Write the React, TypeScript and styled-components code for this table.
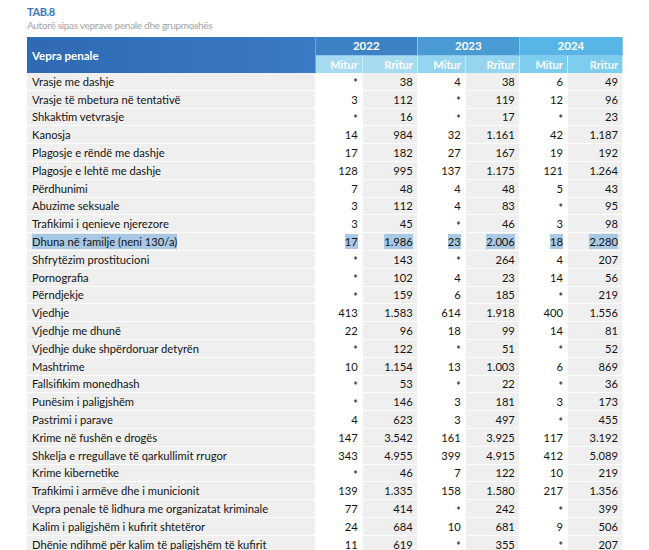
import styled, { createGlobalStyle } from 'styled-components'

const GlobalStyle = createGlobalStyle`
  html, body {
    margin: 0;
    padding: 0;
    background: #ffffff;
  }
  body {
    font-family: Lato, 'Liberation Sans', sans-serif;
  }
`

type Row = {
  name: string
  values: string[]
  selected?: boolean
}

const rows: Row[] = [
  { name: 'Vrasje me dashje', values: ['*', '38', '4', '38', '6', '49'] },
  { name: 'Vrasje të mbetura në tentativë', values: ['3', '112', '*', '119', '12', '96'] },
  { name: 'Shkaktim vetvrasje', values: ['*', '16', '*', '17', '*', '23'] },
  { name: 'Kanosja', values: ['14', '984', '32', '1.161', '42', '1.187'] },
  { name: 'Plagosje e rëndë me dashje', values: ['17', '182', '27', '167', '19', '192'] },
  { name: 'Plagosje e lehtë me dashje', values: ['128', '995', '137', '1.175', '121', '1.264'] },
  { name: 'Përdhunimi', values: ['7', '48', '4', '48', '5', '43'] },
  { name: 'Abuzime seksuale', values: ['3', '112', '4', '83', '*', '95'] },
  { name: 'Trafikimi i qenieve njerezore', values: ['3', '45', '*', '46', '3', '98'] },
  {
    name: 'Dhuna në familje (neni 130/a)',
    values: ['17', '1.986', '23', '2.006', '18', '2.280'],
    selected: true,
  },
  { name: 'Shfrytëzim prostitucioni', values: ['*', '143', '*', '264', '4', '207'] },
  { name: 'Pornografia', values: ['*', '102', '4', '23', '14', '56'] },
  { name: 'Përndjekje', values: ['*', '159', '6', '185', '*', '219'] },
  { name: 'Vjedhje', values: ['413', '1.583', '614', '1.918', '400', '1.556'] },
  { name: 'Vjedhje me dhunë', values: ['22', '96', '18', '99', '14', '81'] },
  { name: 'Vjedhje duke shpërdoruar detyrën', values: ['*', '122', '*', '51', '*', '52'] },
  { name: 'Mashtrime', values: ['10', '1.154', '13', '1.003', '6', '869'] },
  { name: 'Fallsifikim monedhash', values: ['*', '53', '*', '22', '*', '36'] },
  { name: 'Punësim i paligjshëm', values: ['*', '146', '3', '181', '3', '173'] },
  { name: 'Pastrimi i parave', values: ['4', '623', '3', '497', '*', '455'] },
  { name: 'Krime në fushën e drogës', values: ['147', '3.542', '161', '3.925', '117', '3.192'] },
  {
    name: 'Shkelja e rregullave të qarkullimit rrugor',
    values: ['343', '4.955', '399', '4.915', '412', '5.089'],
  },
  { name: 'Krime kibernetike', values: ['*', '46', '7', '122', '10', '219'] },
  {
    name: 'Trafikimi i armëve dhe i municionit',
    values: ['139', '1.335', '158', '1.580', '217', '1.356'],
  },
  {
    name: 'Vepra penale të lidhura me organizatat kriminale',
    values: ['77', '414', '*', '242', '*', '399'],
  },
  {
    name: 'Kalim i paligjshëm i kufirit shtetëror',
    values: ['24', '684', '10', '681', '9', '506'],
  },
  {
    name: 'Dhënie ndihmë për kalim të paligjshëm të kufirit',
    values: ['11', '619', '*', '355', '*', '207'],
  },
]

const years = [
  { year: '2022', top: '#3c82c5', sub: '#a7dbf1' },
  { year: '2023', top: '#4a9ad4', sub: '#95d5f0' },
  { year: '2024', top: '#58b6e6', sub: '#7dcdee' },
]

const colWidths = [288, 47, 55, 48, 54, 48, 55]

function App() {
  return (
    <>
      <GlobalStyle />
      <Page>
        <Title>TAB.8</Title>
        <Subtitle>Autorë sipas veprave penale dhe grupmoshës</Subtitle>
        <Table>
          <colgroup>
            {colWidths.map((w, i) => (
              <col key={i} style={{ width: w }} />
            ))}
          </colgroup>
          <thead>
            <tr>
              <NameHead rowSpan={2}>Vepra penale</NameHead>
              {years.map((y) => (
                <YearHead key={y.year} colSpan={2} $bg={y.top}>
                  {y.year}
                </YearHead>
              ))}
            </tr>
            <tr>
              {years.map((y) => [
                <SubHead key={y.year + 'm'} $bg={y.sub}>
                  Mitur
                </SubHead>,
                <SubHead key={y.year + 'r'} $bg={y.sub}>
                  Rritur
                </SubHead>,
              ])}
            </tr>
          </thead>
          <tbody>
            {rows.map((r) => (
              <tr key={r.name}>
                <NameCell>
                  <Mark $on={!!r.selected}>{r.name}</Mark>
                </NameCell>
                {r.values.map((v, i) => (
                  <NumCell key={i} $shaded={i % 2 === 1}>
                    {v === '*' ? (
                      <Star>*</Star>
                    ) : (
                      <Mark $on={!!r.selected}>{v}</Mark>
                    )}
                  </NumCell>
                ))}
              </tr>
            ))}
          </tbody>
        </Table>
      </Page>
    </>
  )
}

const Page = styled.div`
  padding: 5px 0 0 27px;
  width: 596px;
`

const Title = styled.div`
  font-family: Lato, 'Liberation Sans', sans-serif;
  font-weight: 700;
  font-size: 11px;
  line-height: 13px;
  color: #3a78bd;
  letter-spacing: -0.4px;
`

const Subtitle = styled.div`
  font-family: Lato, 'Liberation Sans', sans-serif;
  font-size: 10px;
  line-height: 14px;
  color: #a3a3a3;
  letter-spacing: -0.3px;
  margin-bottom: 5px;
`

const Table = styled.table`
  border-collapse: collapse;
  table-layout: fixed;
  width: 596px;
  font-size: 11.2px;
  color: #141414;
`

const NameHead = styled.th`
  background: linear-gradient(90deg, #3069b4 0%, #3a7bc3 100%);
  color: #ffffff;
  font-weight: 700;
  font-size: 11.5px;
  text-align: left;
  padding: 0 0 0 5px;
  height: 36px;
  border-right: 1px solid #6aa5dc;
`

const YearHead = styled.th<{ $bg: string }>`
  background: ${(p) => p.$bg};
  color: #ffffff;
  font-weight: 700;
  font-size: 11.5px;
  text-align: center;
  height: 17px;
  padding: 0;
  border-right: 1px solid #8cc6ea;
  border-bottom: 1px solid #8cc6ea;
`

const SubHead = styled.th<{ $bg: string }>`
  background: ${(p) => p.$bg};
  color: #ffffff;
  font-weight: 700;
  font-size: 11px;
  text-align: right;
  padding: 0 4px 0 0;
  height: 17px;
  border-right: 1px solid #c8ecf8;
`

const NameCell = styled.td`
  background: #efefef;
  height: 16.8px;
  padding: 0 0 0 5px;
  white-space: nowrap;
  border-bottom: 1px solid #ffffff;
  border-right: 1px solid #ffffff;
`

const NumCell = styled.td<{ $shaded: boolean }>`
  background: ${(p) => (p.$shaded ? '#efefef' : '#ffffff')};
  text-align: right;
  padding: 0 4px 0 0;
  white-space: nowrap;
  border-bottom: 1px solid #ffffff;
  border-right: 1px solid #ffffff;
`

const Mark = styled.span<{ $on: boolean }>`
  background: ${(p) => (p.$on ? '#a9c8e3' : 'transparent')};
  padding: 1px 0;
`

const Star = styled.span`
  display: inline-block;
  font-weight: 700;
  font-size: 10.5px;
  vertical-align: -3px;
  color: #333333;
`

export default App
